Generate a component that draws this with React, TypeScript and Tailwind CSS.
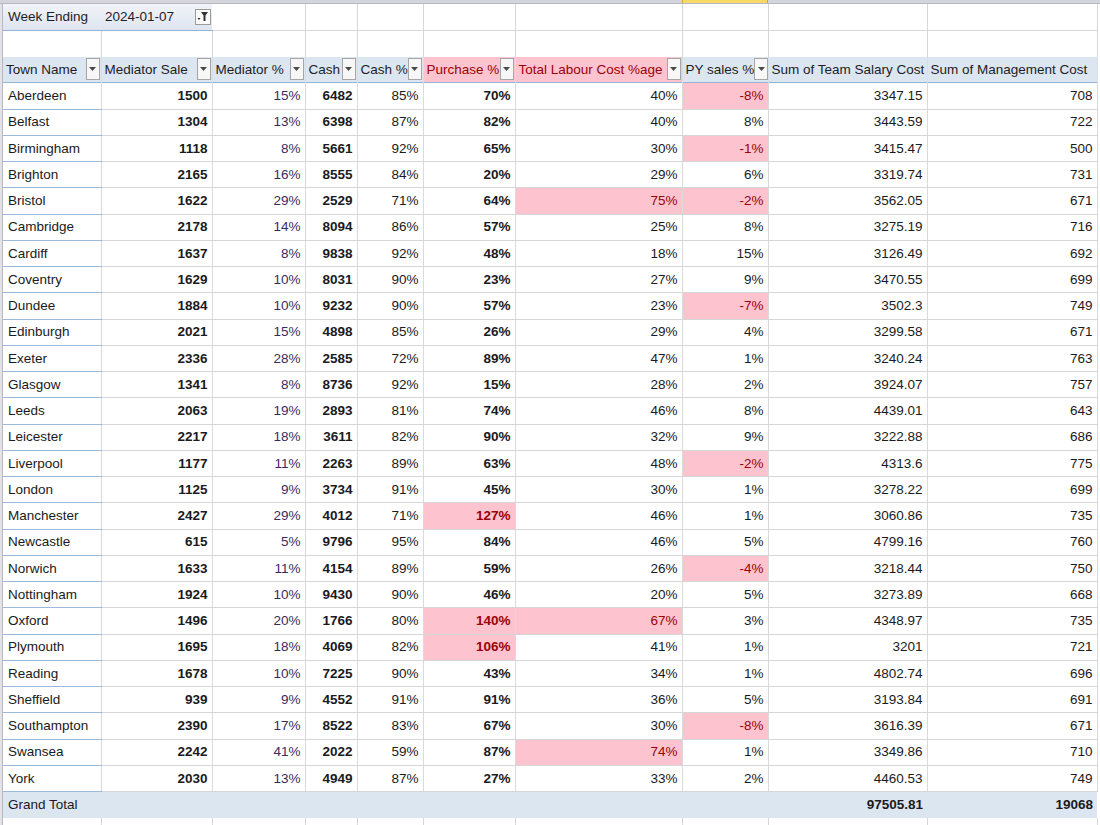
import React from "react";

type Row = [string, number, number, number, number, number, number, number, string, number];

const rows: Row[] = [
  ["Aberdeen", 1500, 15, 6482, 85, 70, 40, -8, "3347.15", 708],
  ["Belfast", 1304, 13, 6398, 87, 82, 40, 8, "3443.59", 722],
  ["Birmingham", 1118, 8, 5661, 92, 65, 30, -1, "3415.47", 500],
  ["Brighton", 2165, 16, 8555, 84, 20, 29, 6, "3319.74", 731],
  ["Bristol", 1622, 29, 2529, 71, 64, 75, -2, "3562.05", 671],
  ["Cambridge", 2178, 14, 8094, 86, 57, 25, 8, "3275.19", 716],
  ["Cardiff", 1637, 8, 9838, 92, 48, 18, 15, "3126.49", 692],
  ["Coventry", 1629, 10, 8031, 90, 23, 27, 9, "3470.55", 699],
  ["Dundee", 1884, 10, 9232, 90, 57, 23, -7, "3502.3", 749],
  ["Edinburgh", 2021, 15, 4898, 85, 26, 29, 4, "3299.58", 671],
  ["Exeter", 2336, 28, 2585, 72, 89, 47, 1, "3240.24", 763],
  ["Glasgow", 1341, 8, 8736, 92, 15, 28, 2, "3924.07", 757],
  ["Leeds", 2063, 19, 2893, 81, 74, 46, 8, "4439.01", 643],
  ["Leicester", 2217, 18, 3611, 82, 90, 32, 9, "3222.88", 686],
  ["Liverpool", 1177, 11, 2263, 89, 63, 48, -2, "4313.6", 775],
  ["London", 1125, 9, 3734, 91, 45, 30, 1, "3278.22", 699],
  ["Manchester", 2427, 29, 4012, 71, 127, 46, 1, "3060.86", 735],
  ["Newcastle", 615, 5, 9796, 95, 84, 46, 5, "4799.16", 760],
  ["Norwich", 1633, 11, 4154, 89, 59, 26, -4, "3218.44", 750],
  ["Nottingham", 1924, 10, 9430, 90, 46, 20, 5, "3273.89", 668],
  ["Oxford", 1496, 20, 1766, 80, 140, 67, 3, "4348.97", 735],
  ["Plymouth", 1695, 18, 4069, 82, 106, 41, 1, "3201", 721],
  ["Reading", 1678, 10, 7225, 90, 43, 34, 1, "4802.74", 696],
  ["Sheffield", 939, 9, 4552, 91, 91, 36, 5, "3193.84", 691],
  ["Southampton", 2390, 17, 8522, 83, 67, 30, -8, "3616.39", 671],
  ["Swansea", 2242, 41, 2022, 59, 87, 74, 1, "3349.86", 710],
  ["York", 2030, 13, 4949, 87, 27, 33, 2, "4460.53", 749],
];

// column widths in px, Town Name .. Sum of Management Cost
const widths = [98, 111, 93, 52, 66, 92, 167, 86, 159, 170];

const FilterButton = () => (
  <span className="ml-auto flex h-[22px] w-[14px] shrink-0 items-center justify-center border border-[#a6a6a6] bg-[#f7f7f7]">
    <svg width="7" height="4" viewBox="0 0 7 4">
      <path d="M0 0 L7 0 L3.5 4 Z" fill="#4a4a4a" />
    </svg>
  </span>
);

const Header = ({ label, pink, filter = true }: { label: string; pink?: boolean; filter?: boolean }) => (
  <td className={`overflow-hidden border-r border-[#d9dde4] pl-[3px] pr-[1px] ${pink ? "bg-[#fdc3cf] text-[#9c0006]" : "text-[#1d1d26]"}`}>
    <div className="flex items-center whitespace-nowrap">
      <span>{label}</span>
      {filter && <FilterButton />}
    </div>
  </td>
);

const Cell = ({ v, bold, pink, purple, first }: { v: string; bold?: boolean; pink?: boolean; purple?: boolean; first?: boolean }) => (
  <td
    className={`whitespace-nowrap border-r border-[#dadada] ${first ? "border-b border-b-[#9db8da] pl-[5px] text-left" : "border-b border-b-[#d6d6d6] pr-[4px] text-right"} ${
      bold ? "font-bold" : ""
    } ${pink ? "bg-[#fdc3cf] text-[#9c0006]" : purple ? "text-[#3b2a62]" : "text-[#1a1a22]"}`}
  >
    {v}
  </td>
);

export default function App() {
  return (
    <div
      className="relative h-[825px] w-[1100px] overflow-hidden bg-white text-[13.5px] leading-none"
      style={{ fontFamily: '"Liberation Sans", Arial, sans-serif' }}
    >
      <div className="flex h-[4px] border-b border-[#b8b8c0] bg-[#d4d4dc]">
        <div className="w-[682px]" />
        <div className="w-[86px] border-x border-[#e0a030] bg-[#f8d868]" />
      </div>
      <div className="flex">
        <div className="w-[3px] shrink-0 border-r border-[#b8b8c0] bg-[#e2e2e8]" />
        <table className="w-[1094px] table-fixed border-collapse">
          <colgroup>
            {widths.map((w, i) => (
              <col key={i} style={{ width: w }} />
            ))}
          </colgroup>
          <tbody>
            <tr className="h-[26px]">
              <td colSpan={2} className="border-b border-[#95b3d7] bg-gradient-to-b from-[#f1f4f9] to-[#dee5f0] pl-[5px] pr-[1px] text-[#1d1d26]">
                <div className="flex items-center">
                  <span className="w-[97px]">Week Ending</span>
                  <span>2024-01-07</span>
                  <span className="ml-auto flex h-[16px] w-[16px] items-center justify-center border border-[#9a9a9a] bg-[#fafafa]">
                    <svg width="12" height="11" viewBox="0 0 12 11">
                      <path d="M4 1 L11 1 L8.5 4.5 L8.5 10 L6.5 10 L6.5 4.5 Z" fill="#333" />
                      <path d="M0.5 7 L3.5 7 L2 9 Z" fill="#333" />
                    </svg>
                  </span>
                </div>
              </td>
              {widths.slice(2).map((_, i) => (
                <td key={i} className="border-b border-r border-[#d6d6d6]" />
              ))}
            </tr>
            <tr className="h-[26.5px]">
              {widths.map((_, i) => (
                <td key={i} className="border-r border-[#d6d6d6]" />
              ))}
            </tr>
            <tr className="h-[26.25px] border-b border-[#95b3d7] bg-[#dce6f1]">
              <Header label="Town Name" />
              <Header label="Mediator Sale" />
              <Header label="Mediator %" />
              <Header label="Cash" />
              <Header label="Cash %" />
              <Header label="Purchase %" pink />
              <Header label="Total Labour Cost %age" pink />
              <Header label="PY sales %" />
              <Header label="Sum of Team Salary Cost" filter={false} />
              <Header label="Sum of Management Cost" filter={false} />
            </tr>
            {rows.map((r) => (
              <tr key={r[0]} className="h-[26.25px]">
                <Cell v={r[0]} first />
                <Cell v={String(r[1])} bold />
                <Cell v={`${r[2]}%`} purple />
                <Cell v={String(r[3])} bold />
                <Cell v={`${r[4]}%`} />
                <Cell v={`${r[5]}%`} bold pink={r[5] > 100} />
                <Cell v={`${r[6]}%`} pink={r[6] > 50} />
                <Cell v={`${r[7]}%`} pink={r[7] < 0} />
                <Cell v={r[8]} />
                <Cell v={String(r[9])} />
              </tr>
            ))}
            <tr className="h-[26.25px] border-t border-[#95b3d7] bg-[#dce6f1] text-[#1a1a22]">
              <td className="pl-[5px]">Grand Total</td>
              <td colSpan={7} />
              <td className="pr-[4px] text-right font-bold">97505.81</td>
              <td className="pr-[4px] text-right font-bold">19068</td>
            </tr>
            <tr className="h-[10px]">
              {widths.map((_, i) => (
                <td key={i} className="border-r border-[#d6d6d6]" />
              ))}
            </tr>
          </tbody>
        </table>
      </div>
    </div>
  );
}
